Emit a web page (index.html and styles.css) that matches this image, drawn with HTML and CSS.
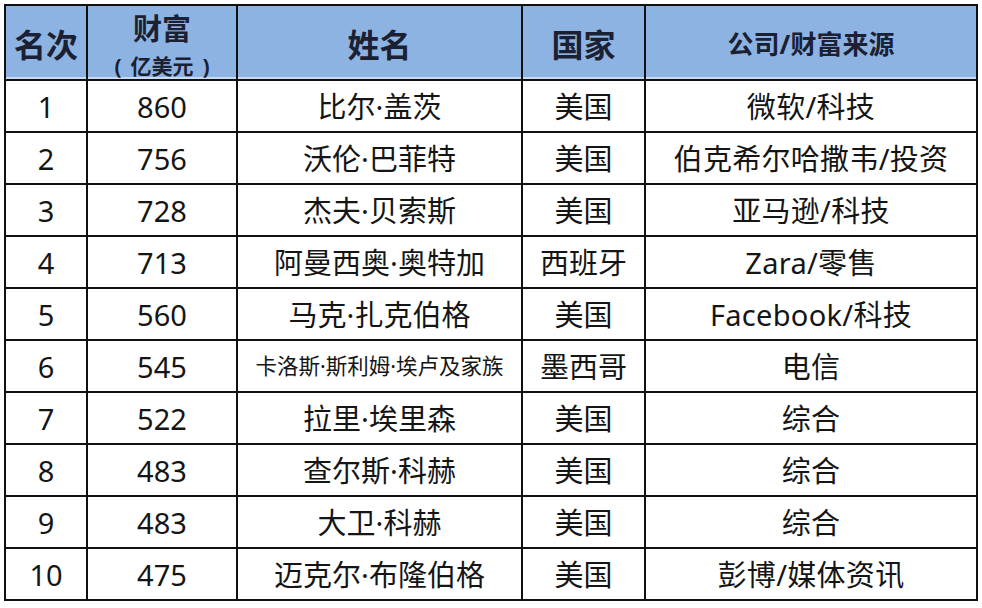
FILE: index.html
```html
<!DOCTYPE html>
<html lang="zh-CN">
<head>
<meta charset="utf-8">
<title>富豪榜</title>
<link rel="stylesheet" href="styles.css">
</head>
<body>
<div class="sheet">
<table class="rank">
  <colgroup>
    <col class="c-rank">
    <col class="c-wealth">
    <col class="c-name">
    <col class="c-country">
    <col class="c-source">
  </colgroup>
  <thead>
    <tr class="head">
      <th class="big">名次</th>
      <th class="wealth"><div class="w1">财富</div><div class="w2"><span class="pl">(</span>亿美元<span class="pr">)</span></div></th>
      <th class="big">姓名</th>
      <th class="big">国家</th>
      <th class="mid">公司/财富来源</th>
    </tr>
  </thead>
  <tbody>
    <tr><td>1</td><td>860</td><td>比尔·盖茨</td><td>美国</td><td>微软/科技</td></tr>
    <tr><td>2</td><td>756</td><td>沃伦·巴菲特</td><td>美国</td><td>伯克希尔哈撒韦/投资</td></tr>
    <tr><td>3</td><td>728</td><td>杰夫·贝索斯</td><td>美国</td><td>亚马逊/科技</td></tr>
    <tr><td>4</td><td>713</td><td>阿曼西奥·奥特加</td><td>西班牙</td><td>Zara/零售</td></tr>
    <tr><td>5</td><td>560</td><td>马克·扎克伯格</td><td>美国</td><td>Facebook/科技</td></tr>
    <tr><td>6</td><td>545</td><td class="small">卡洛斯·斯利姆·埃卢及家族</td><td>墨西哥</td><td>电信</td></tr>
    <tr><td>7</td><td>522</td><td>拉里·埃里森</td><td>美国</td><td>综合</td></tr>
    <tr><td>8</td><td>483</td><td>查尔斯·科赫</td><td>美国</td><td>综合</td></tr>
    <tr><td>9</td><td>483</td><td>大卫·科赫</td><td>美国</td><td>综合</td></tr>
    <tr><td>10</td><td>475</td><td>迈克尔·布隆伯格</td><td>美国</td><td>彭博/媒体资讯</td></tr>
  </tbody>
</table>
</div>
</body>
</html>
```
FILE: styles.css
```css
html, body {
  margin: 0;
  padding: 0;
  background: #ffffff;
}
body {
  font-family: "Noto Sans", "Noto Sans CJK SC", sans-serif;
  color: #151515;
}
.sheet {
  padding: 4px 0 0 4px;
}
.rank {
  border-collapse: collapse;
  table-layout: fixed;
  width: 972px;
}
.c-rank { width: 82px; }
.c-wealth { width: 150px; }
.c-name { width: 285px; }
.c-country { width: 123px; }
.c-source { width: 332px; }

.rank th, .rank td {
  border: 2px solid #101010;
  text-align: center;
  vertical-align: middle;
  padding: 0;
  white-space: nowrap;
  overflow: hidden;
}
.head {
  height: 75px;
}
.head th {
  background: #8db3e2;
  color: #1b2133;
  font-weight: 700;
  box-shadow: inset 0 -2px 0 #c9dbf2;
}
.head th.wealth {
  padding-top: 5px;
}
.big {
  font-size: 32px;
}
.mid {
  font-size: 26px;
}
.w1 {
  font-size: 29px;
  line-height: 34px;
}
.w2 {
  font-size: 21px;
  line-height: 26px;
  margin-top: 7px;
}
.pl {
  margin-right: 9px;
}
.pr {
  margin-left: 9px;
}
.rank tbody tr {
  height: 52px;
}
.rank td {
  font-size: 29px;
  font-weight: 400;
  line-height: 1;
}
.rank td.small {
  font-size: 21.5px;
}
.rank td:last-child {
  letter-spacing: 0.3px;
}
```
